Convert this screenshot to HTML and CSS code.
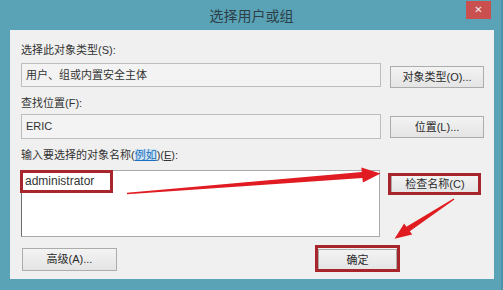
FILE: index.html
```html
<!DOCTYPE html>
<html lang="zh-CN">
<head>
<meta charset="utf-8">
<title>选择用户或组</title>
<link rel="stylesheet" href="styles.css">
</head>
<body>
<div class="window">
  <div class="titlebar">
    <span class="spacer"></span>
    <span class="title">选择用户或组</span>
    <span class="close-wrap"><span class="close">✕</span></span>
  </div>
  <div class="client">
    <div class="label">选择此对象类型(S):</div>
    <div class="row r1">
      <div class="field">用户、组或内置安全主体</div>
      <button class="btn">对象类型(O)...</button>
    </div>
    <div class="label l2">查找位置(F):</div>
    <div class="row r2">
      <div class="field f2">ERIC</div>
      <button class="btn">位置(L)...</button>
    </div>
    <div class="label l3">输入要选择的对象名称(<a class="link">例如</a>)(<u>E</u>):</div>
    <div class="row r3">
      <div class="textarea">administrator</div>
      <button class="btn check">检查名称(C)</button>
    </div>
    <div class="row bottom">
      <button class="btn adv">高级(A)...</button>
      <button class="btn ok">确定</button>
    </div>
  </div>
</div>
<svg class="annot" width="503" height="290" viewBox="0 0 503 290" xmlns="http://www.w3.org/2000/svg">
  <rect x="21.5" y="171.5" width="90" height="20" fill="none" stroke="#a8252c" stroke-width="3"/>
  <rect x="389.5" y="174.5" width="90" height="19" fill="none" stroke="#a8252c" stroke-width="3"/>
  <rect x="316.5" y="246.5" width="82" height="24" fill="none" stroke="#a8252c" stroke-width="3"/>
  <polygon points="127,192.8 361.8,171.9 361.3,167.4 380.5,173.5 362.9,182.4 362.4,178.0 127,194.2" fill="#e01b22"/>
  <polygon points="453.6,198.5 406.4,226.8 404.2,223.5 394.5,238.8 412.2,234.4 409.8,231.2 454.4,199.5" fill="#e01b22"/>
</svg>
</body>
</html>
```

FILE: styles.css
```css
* { box-sizing: border-box; }
html, body { margin: 0; padding: 0; }
body {
  width: 503px;
  height: 290px;
  overflow: hidden;
  background: #5aa3b7;
  font-family: "Liberation Sans", "Noto Sans CJK SC", sans-serif;
  font-size: 11px;
  color: #333;
  position: relative;
}
.window {
  width: 503px;
  height: 290px;
  border-right: 2px solid #4a93a8;
}
.titlebar {
  height: 30px;
  display: grid;
  grid-template-columns: 1fr auto 1fr;
  align-items: start;
}
.title {
  font-family: "Noto Sans CJK SC", sans-serif;
  font-size: 14px;
  line-height: 30px;
  color: #2c3f47;
  padding-left: 2px;
}
.close-wrap {
  display: flex;
  justify-content: flex-end;
  padding-right: 10px;
  padding-top: 1px;
}
.close {
  width: 25px;
  height: 18px;
  background: #c9504f;
  color: #f4e6e6;
  font-size: 10px;
  line-height: 18px;
  text-align: center;
  font-family: "DejaVu Sans", sans-serif;
}
.client {
  margin-left: 10px;
  width: 484px;
  height: 249px;
  background: #f0f0f0;
  padding: 12px 10px 0 11px;
}
.label {
  height: 16px;
  line-height: 16px;
  white-space: nowrap;
}
.l2 { margin-top: 7px; }
.l3 { margin-top: 8px; }
.link {
  color: #1a6fc0;
  background: #cfe4f3;
  text-decoration: underline;
}
.row {
  display: flex;
  align-items: flex-start;
}
.r1 { margin-top: 5px; }
.r2 { margin-top: 3px; }
.r3 { margin-top: 7px; }
.bottom { margin-top: 11px; }
.field {
  width: 360px;
  height: 24px;
  border: 1px solid #bdbdbd;
  background: #f3f3f3;
  padding-left: 4px;
  line-height: 22px;
  white-space: nowrap;
}
.f2 { height: 25px; line-height: 23px; }
.btn {
  font-family: "Liberation Sans", "Noto Sans CJK SC", sans-serif;
  font-size: 11px;
  color: #2a2a2a;
  width: 94px;
  height: 22px;
  margin: 3px 0 0 9px;
  padding: 0;
  border: 1px solid #acacac;
  background: linear-gradient(#f3f3f3, #e4e4e4);
  line-height: 20px;
  text-align: center;
}
.r2 .btn { margin-top: 2px; }
.textarea {
  width: 359px;
  height: 67px;
  background: #fff;
  border: 1px solid #a9a9a9;
  border-left-color: #6e6e6e;
  padding: 2px 0 0 3px;
  font-size: 12px;
  line-height: 16px;
  color: #333;
}
.btn.check {
  width: 88px;
  height: 19px;
  margin: 5px 0 0 11px;
  line-height: 17px;
}
.btn.adv {
  width: 95px;
  height: 23px;
  margin: 0 0 0 1px;
  line-height: 21px;
}
.btn.ok {
  width: 79px;
  height: 22px;
  margin: 1px 0 0 201px;
  line-height: 20px;
}
.annot {
  position: absolute;
  left: 0;
  top: 0;
  pointer-events: none;
}
```
